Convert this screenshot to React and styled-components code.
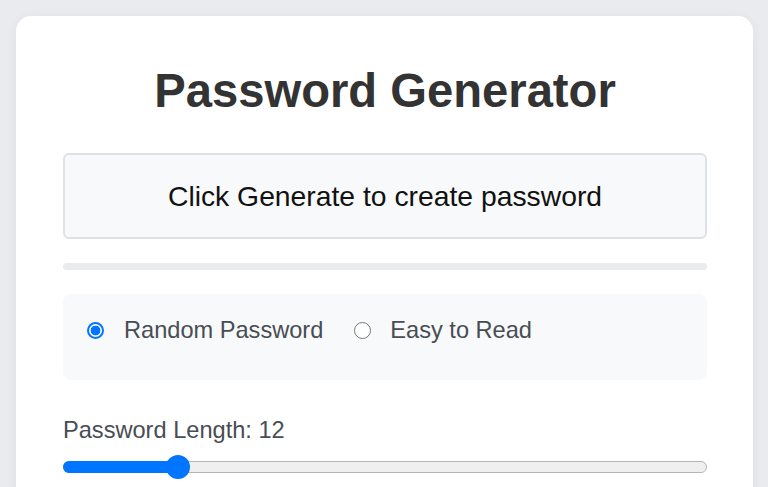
import React from "react";
import styled, { createGlobalStyle } from "styled-components";

const Global = createGlobalStyle`
  html, body { margin: 0; padding: 0; }
  body {
    background: #e9ebef;
    font-family: "Liberation Sans", Arial, sans-serif;
    overflow: hidden;
  }
`;

const Page = styled.div`
  padding: 16px 15px 0 16px;
  min-height: 487px;
  box-sizing: border-box;
`;

const Card = styled.div`
  background: #ffffff;
  border-radius: 15px;
  box-shadow: 0 2px 12px rgba(0, 0, 0, 0.06);
  padding: 48px 46px 40px 47px;
  min-height: 520px;
  box-sizing: border-box;
  display: flex;
  flex-direction: column;
`;

const Title = styled.h1`
  margin: 0;
  text-align: center;
  font-size: 47.2px;
  font-weight: 700;
  color: #333333;
  line-height: 54px;
`;

const Display = styled.div`
  margin-top: 35px;
  height: 86px;
  box-sizing: border-box;
  border: 2px solid #dee2e6;
  border-radius: 6px;
  background: #f8f9fa;
  display: flex;
  align-items: center;
  justify-content: center;
  font-size: 28.3px;
  color: #111111;
`;

const Strength = styled.div`
  margin-top: 24px;
  height: 7px;
  border-radius: 4px;
  background: #e9ecef;
`;

const Options = styled.div`
  margin-top: 24px;
  background: #f8f9fa;
  border-radius: 8px;
  padding: 22px 24px 35px;
  display: flex;
  height: 86px;
  box-sizing: border-box;
  align-items: flex-start;
`;

const RadioLabel = styled.label`
  display: flex;
  align-items: center;
  height: 28px;
  font-size: 23.6px;
  color: #484d54;
  margin-right: ${(p) => (p.$last ? 0 : "31px")};
`;

const RadioDot = styled.span`
  width: 17px;
  height: 17px;
  box-sizing: border-box;
  border-radius: 50%;
  margin-right: ${(p) => (p.$checked ? "20px" : "19px")};
  flex: none;
  border: ${(p) => (p.$checked ? "2px solid #0075ff" : "1.5px solid #767676")};
  background: ${(p) =>
    p.$checked
      ? "radial-gradient(circle, #0075ff 0 4.6px, #ffffff 5.2px)"
      : "#ffffff"};
`;

const LengthLabel = styled.div`
  margin-top: 36px;
  font-size: 23.6px;
  color: #484d54;
  line-height: 28px;
`;

const Slider = styled.div`
  margin-top: 11px;
  position: relative;
  height: 24px;
  display: flex;
  align-items: center;
`;

const Track = styled.div`
  flex: 1;
  height: 12px;
  box-sizing: border-box;
  border: 1px solid #b5b5b5;
  border-radius: 6px;
  background: #efefef;
`;

const Fill = styled.div`
  position: absolute;
  left: 0;
  top: 6px;
  height: 12px;
  border-radius: 6px;
  background: #0075ff;
`;

const Thumb = styled.div`
  position: absolute;
  top: 0;
  width: 24px;
  height: 24px;
  border-radius: 50%;
  background: #0075ff;
  transform: translateX(-12px);
`;

export default function App() {
  const min = 4;
  const max = 52;
  const value = 12;
  const frac = (value - min) / (max - min);
  const pos = `calc(12px + (100% - 24px) * ${frac})`;
  return (
    <>
      <Global />
      <Page>
        <Card>
          <Title>Password Generator</Title>
          <Display>Click Generate to create password</Display>
          <Strength />
          <Options>
            <RadioLabel>
              <RadioDot $checked />
              Random Password
            </RadioLabel>
            <RadioLabel $last>
              <RadioDot />
              Easy to Read
            </RadioLabel>
          </Options>
          <LengthLabel>Password Length: {value}</LengthLabel>
          <Slider>
            <Track />
            <Fill style={{ width: pos }} />
            <Thumb style={{ left: pos }} />
          </Slider>
        </Card>
      </Page>
    </>
  );
}
